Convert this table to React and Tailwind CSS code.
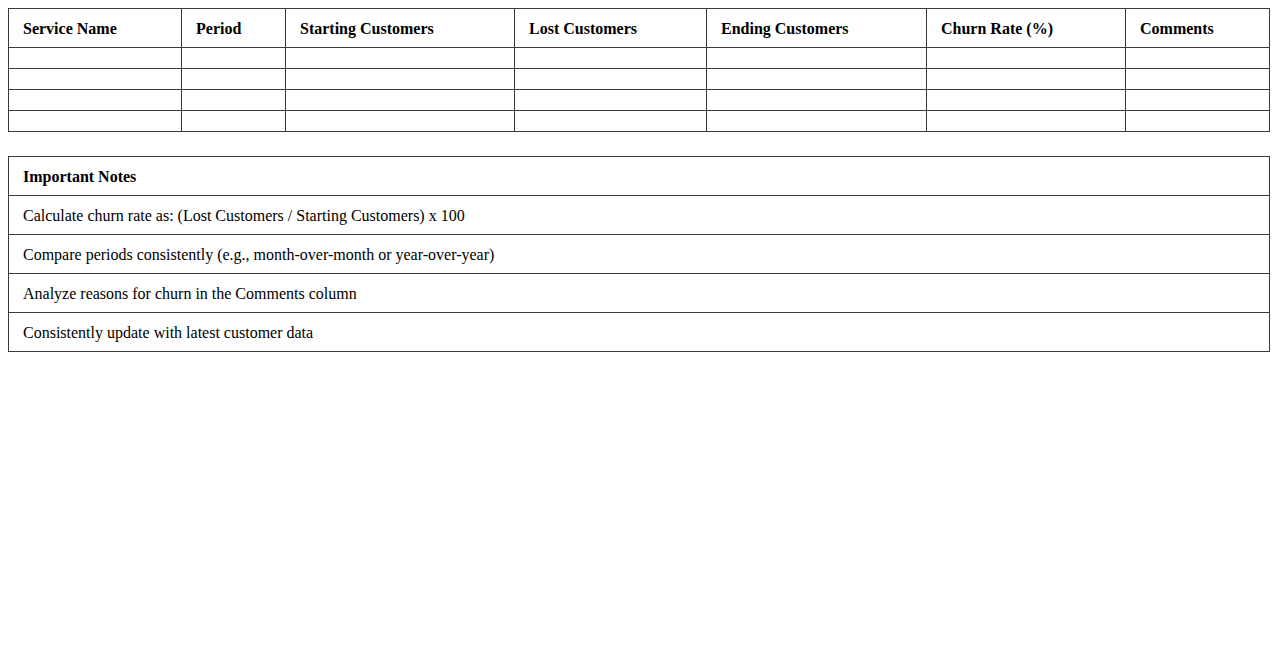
export default function App() {
  const headers = [
    ["Service Name", "w-[173px]"],
    ["Period", "w-[104px]"],
    ["Starting Customers", "w-[229px]"],
    ["Lost Customers", "w-[192px]"],
    ["Ending Customers", "w-[220px]"],
    ["Churn Rate (%)", "w-[199px]"],
    ["Comments", "w-[144px]"],
  ];
  const notes = [
    "Calculate churn rate as: (Lost Customers / Starting Customers) x 100",
    "Compare periods consistently (e.g., month-over-month or year-over-year)",
    "Analyze reasons for churn in the Comments column",
    "Consistently update with latest customer data",
  ];

  return (
    <div className="bg-white min-h-screen p-2 text-black text-base font-['Liberation_Serif',serif]">
      <table className="w-[1262px] table-fixed border-collapse">
        <colgroup>
          {headers.map(([h, w]) => (
            <col key={h} className={w} />
          ))}
        </colgroup>
        <thead>
          <tr>
            {headers.map(([h]) => (
              <th key={h} className="border border-[#3a3a3a] pl-[14px] pr-[15px] pt-[11px] pb-[9px] text-left font-bold leading-[18px]">
                {h}
              </th>
            ))}
          </tr>
        </thead>
        <tbody>
          {[0, 1, 2, 3].map((r) => (
            <tr key={r}>
              {headers.map(([h]) => (
                <td key={h} className="border border-[#3a3a3a] px-[15px] py-[10px]"></td>
              ))}
            </tr>
          ))}
        </tbody>
      </table>

      <table className="mt-6 w-[1262px] border-collapse">
        <thead>
          <tr>
            <th className="border border-[#3a3a3a] pl-[14px] pr-[15px] pt-[11px] pb-[9px] text-left font-bold leading-[18px]">Important Notes</th>
          </tr>
        </thead>
        <tbody>
          {notes.map((n) => (
            <tr key={n}>
              <td className="border border-[#3a3a3a] pl-[14px] pr-[15px] pt-[11px] pb-[9px] leading-[18px]">{n}</td>
            </tr>
          ))}
        </tbody>
      </table>
    </div>
  );
}
